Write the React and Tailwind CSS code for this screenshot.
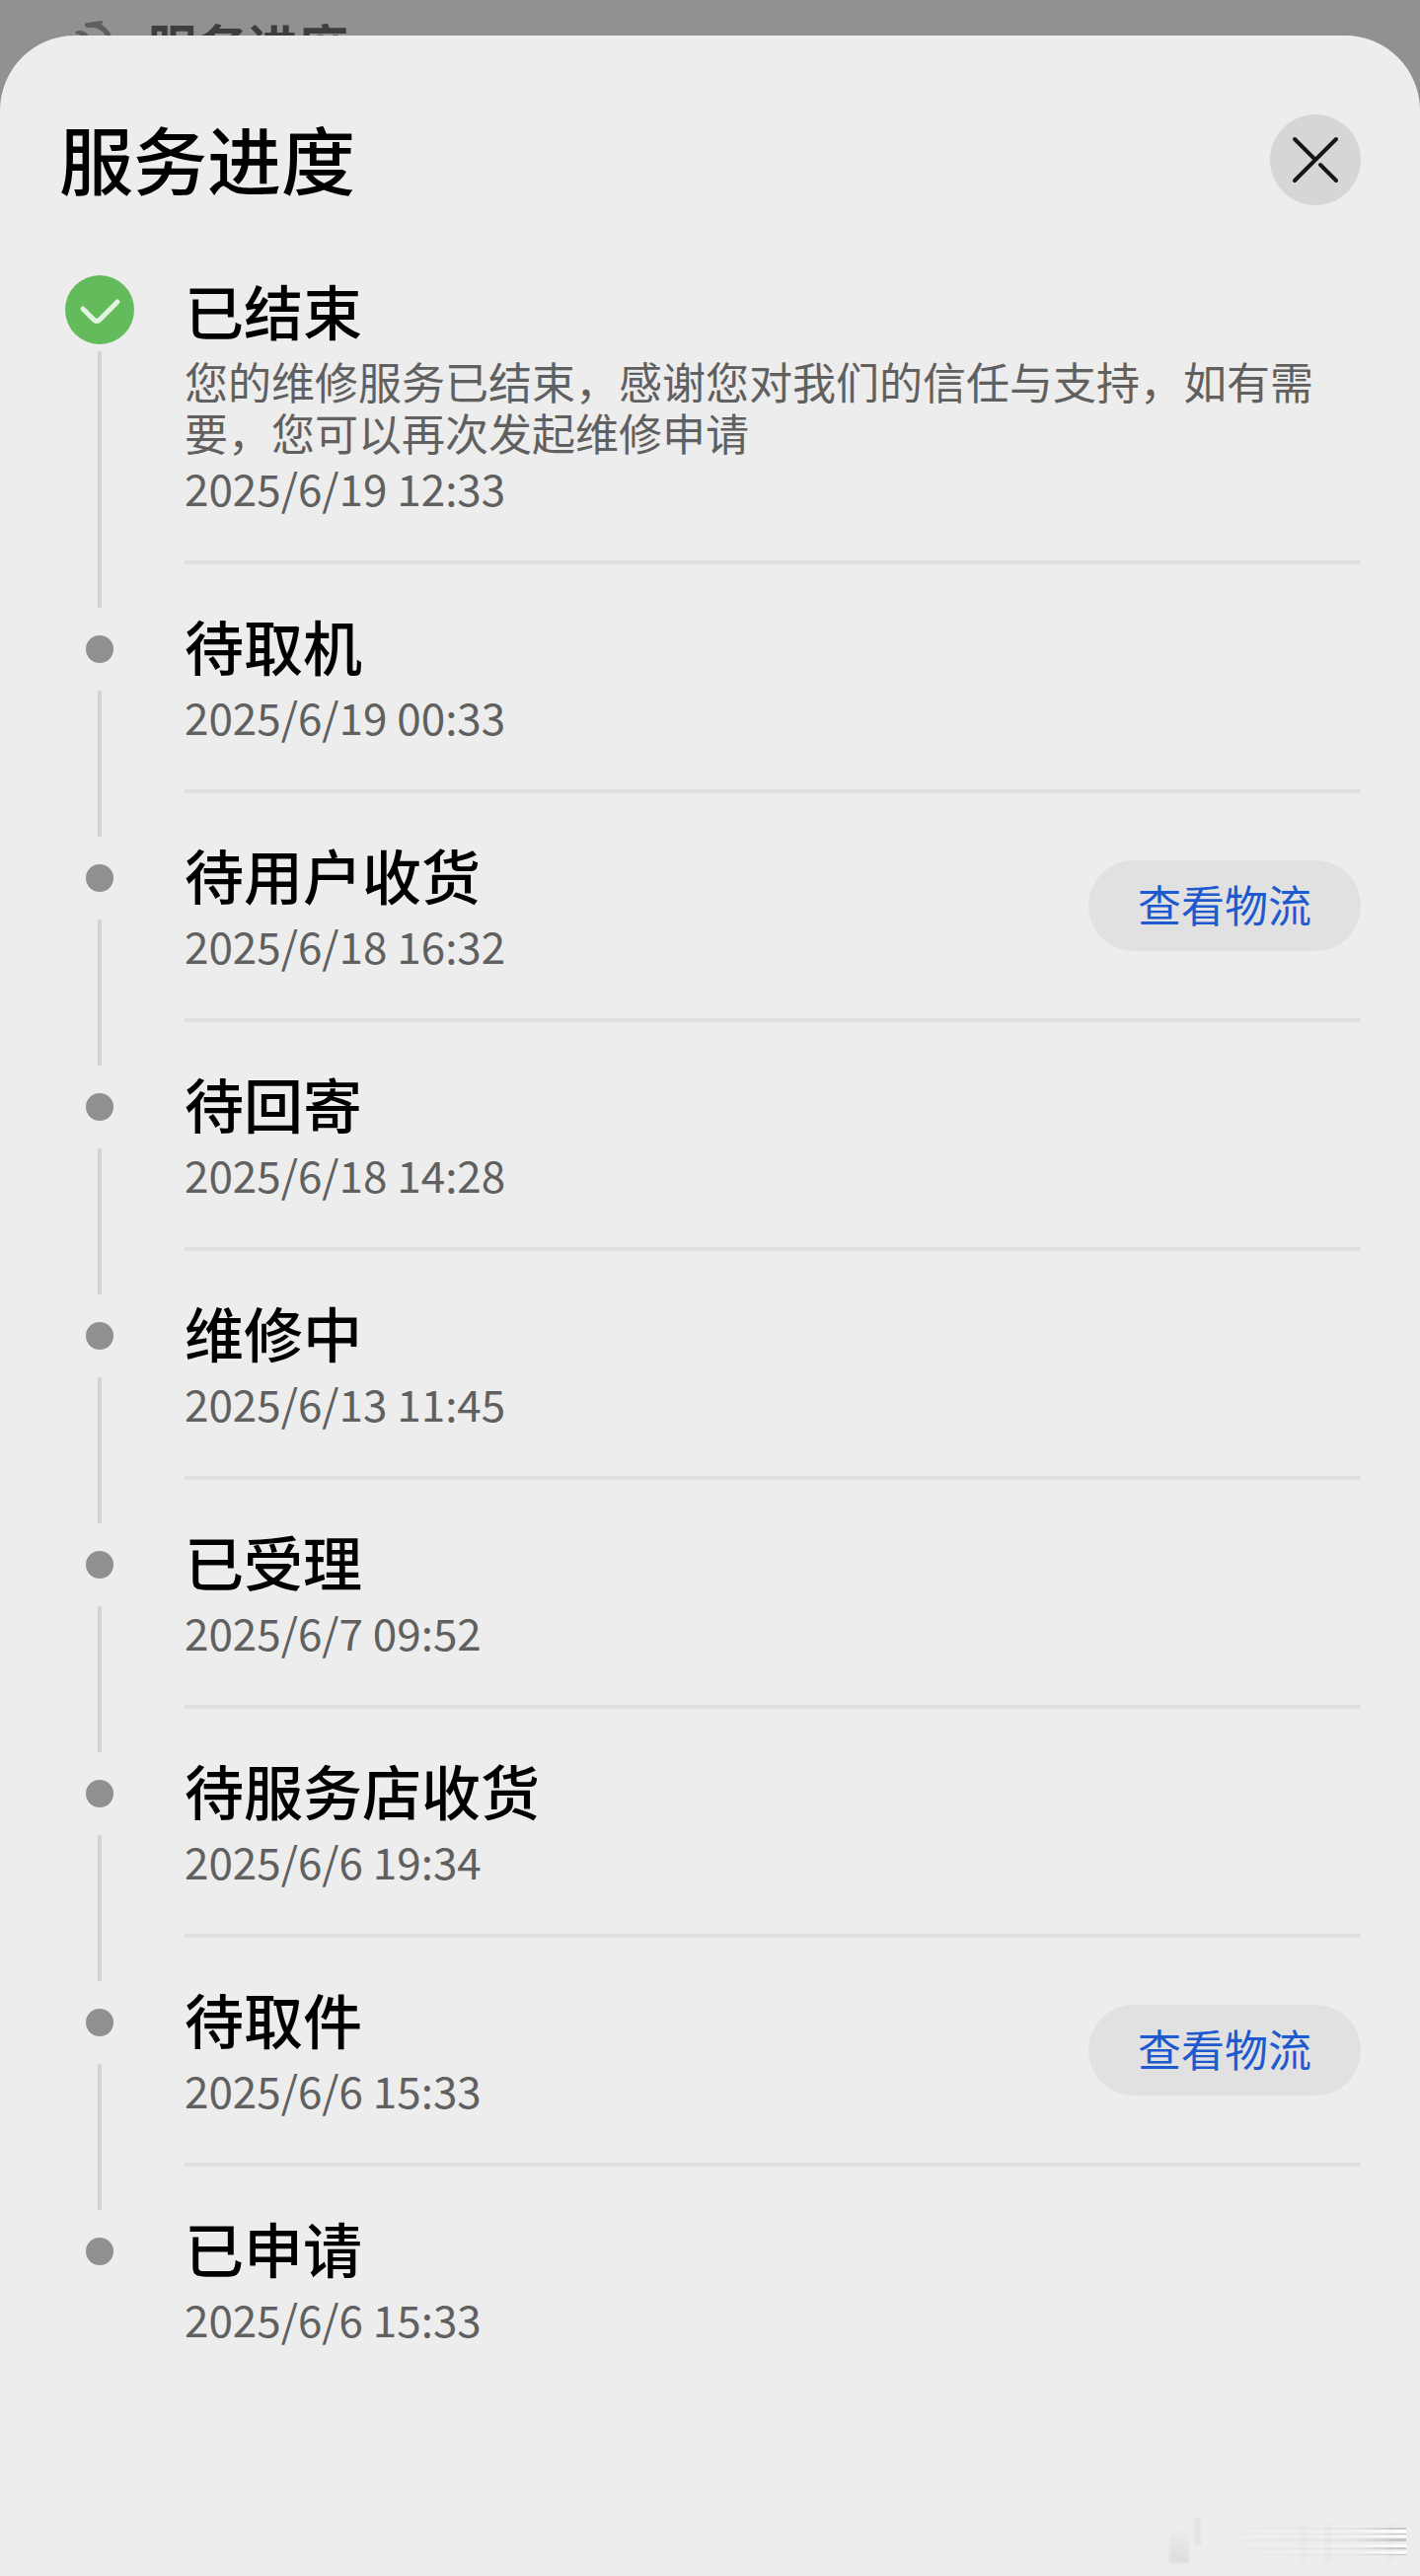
const steps = [
  {
    title: "已结束",
    note: "您的维修服务已结束，感谢您对我们的信任与支持，如有需要，您可以再次发起维修申请",
    time: "2025/6/19 12:33",
    done: true,
  },
  { title: "待取机", time: "2025/6/19 00:33" },
  { title: "待用户收货", time: "2025/6/18 16:32", logistics: true },
  { title: "待回寄", time: "2025/6/18 14:28" },
  { title: "维修中", time: "2025/6/13 11:45" },
  { title: "已受理", time: "2025/6/7 09:52" },
  { title: "待服务店收货", time: "2025/6/6 19:34" },
  { title: "待取件", time: "2025/6/6 15:33", logistics: true },
  { title: "已申请", time: "2025/6/6 15:33" },
];

function ServiceIcon() {
  return (
    <svg viewBox="0 0 48 48" className="h-12 w-12" fill="#5d5e60" aria-hidden="true">
      <path d="M16 3Q13 3 13 5Q13 8 17 8L23 8Q31 10 35 18L37 24L42 24Q41 12 30 5Q32 1 30 1Z" />
      <path d="M3 13Q4 11 9 11Q15 12 18 18L21 24L15 24Q12 17 7 15Q3 14 3 13Z" />
    </svg>
  );
}

function CloseIcon() {
  return (
    <svg viewBox="0 0 92 92" className="h-full w-full" fill="none" stroke="#161616" strokeWidth="4" strokeLinecap="round" aria-hidden="true">
      <path d="M25 67L67 25M25 25L45 45M51 51L67 67" />
    </svg>
  );
}

function DoneMark() {
  return (
    <svg viewBox="0 0 70 70" className="h-[70px] w-[70px]" aria-hidden="true">
      <circle cx="35" cy="35" r="35" fill="#64bb5c" />
      <path d="M18 34L29 45Q32 48 35 45L53 27" fill="none" stroke="#e4f4e2" strokeWidth="5" strokeLinecap="round" />
    </svg>
  );
}

function Watermark() {
  return (
    <svg viewBox="0 0 260 60" className="absolute right-2 bottom-0 h-[60px] w-[260px]" aria-hidden="true">
      <defs>
        <linearGradient id="streak" x1="0" x2="1">
          <stop offset="0" stopColor="#fff" stopOpacity="0" />
          <stop offset="0.75" stopColor="#fff" stopOpacity="0.2" />
          <stop offset="1" stopColor="#fff" />
        </linearGradient>
        <linearGradient id="shade" x1="0" x2="1">
          <stop offset="0" stopColor="#999" stopOpacity="0" />
          <stop offset="0.75" stopColor="#999" stopOpacity="0.1" />
          <stop offset="1" stopColor="#999" stopOpacity="0.5" />
        </linearGradient>
        <linearGradient id="smudge" x1="0" y1="0" x2="0" y2="1">
          <stop offset="0" stopColor="#aaa" stopOpacity="0" />
          <stop offset="1" stopColor="#aaa" stopOpacity="0.25" />
        </linearGradient>
        <filter id="soft" x="-20%" y="-20%" width="140%" height="140%">
          <feGaussianBlur stdDeviation="1" />
        </filter>
      </defs>
      <rect x="14" y="10" width="20" height="37" fill="url(#smudge)" filter="url(#soft)" />
      <rect x="39" y="1" width="7" height="28" fill="#bbb" opacity="0.2" filter="url(#soft)" />
      <g fill="#bbb" opacity="0.07" filter="url(#soft)">
        <rect x="146" y="6" width="7" height="40" />
        <rect x="171" y="6" width="8" height="40" />
        <rect x="234" y="6" width="8" height="40" />
      </g>
      <g fill="url(#shade)">
        <rect x="46" y="11" width="208" height="2" />
        <rect x="46" y="17" width="208" height="1" />
        <rect x="46" y="22" width="208" height="3" />
        <rect x="46" y="31" width="208" height="2" />
        <rect x="46" y="38" width="208" height="1" />
      </g>
      <g fill="url(#streak)">
        <rect x="46" y="13" width="208" height="3" />
        <rect x="46" y="19" width="208" height="2" />
        <rect x="46" y="28" width="208" height="3" />
        <rect x="46" y="35" width="208" height="2" />
      </g>
    </svg>
  );
}

function Step({ step, last }) {
  return (
    <li className="flex">
      <div className="flex w-[82px] shrink-0 flex-col items-center">
        {step.done ? (
          <div className="mb-1 flex h-[76px] items-center">
            <DoneMark />
          </div>
        ) : (
          <div className="flex h-[84px] items-center">
            <span className="h-7 w-7 rounded-full bg-[#909090]" />
          </div>
        )}
        {!last && <div className="w-1 grow bg-[#d4d4d4]" />}
      </div>
      <div className={last ? "ml-[45px] grow" : "mb-11 ml-[45px] grow border-b-4 border-[#e0e0e0] pb-11"}>
        <div className="flex items-center justify-between">
          <div>
            <h2 className="text-[60px] leading-[76px] font-medium text-black">{step.title}</h2>
            {step.note && <p className="mt-2 text-[44px] leading-[52px] text-[#606060]">{step.note}</p>}
            <time className={step.note ? "block text-[44px] leading-[60px] text-[#606060]" : "mt-1 block text-[44px] leading-[60px] text-[#606060]"}>
              {step.time}
            </time>
          </div>
          {step.logistics && (
            <button type="button" className="h-[92px] w-[276px] shrink-0 rounded-full bg-[#e1e1e1] pb-1 text-[44px] leading-[60px] text-[#1f59d0]">
              查看物流
            </button>
          )}
        </div>
      </div>
    </li>
  );
}

export default function App() {
  return (
    <div className="flex min-h-screen flex-col bg-[#909193] font-['Noto_Sans_CJK_SC',sans-serif]">
      <div className="relative h-9">
        <div className="absolute top-5 left-[73px] flex items-start gap-7">
          <ServiceIcon />
          <span className="text-[51px] leading-[52px] font-bold text-[#3d3e40]">服务进度</span>
        </div>
      </div>
      <main className="relative grow rounded-t-[76px] bg-[#ededed] px-[60px] pt-20 pb-16">
        <header className="flex items-center justify-between">
          <h1 className="pb-1 text-[75px] leading-[88px] font-medium text-black">服务进度</h1>
          <button type="button" aria-label="关闭" className="h-[92px] w-[92px] rounded-full bg-[#d6d6d6]">
            <CloseIcon />
          </button>
        </header>
        <ol className="mt-[68px]">
          {steps.map((step, i) => (
            <Step key={step.title} step={step} last={i === steps.length - 1} />
          ))}
        </ol>
        <Watermark />
      </main>
    </div>
  );
}
